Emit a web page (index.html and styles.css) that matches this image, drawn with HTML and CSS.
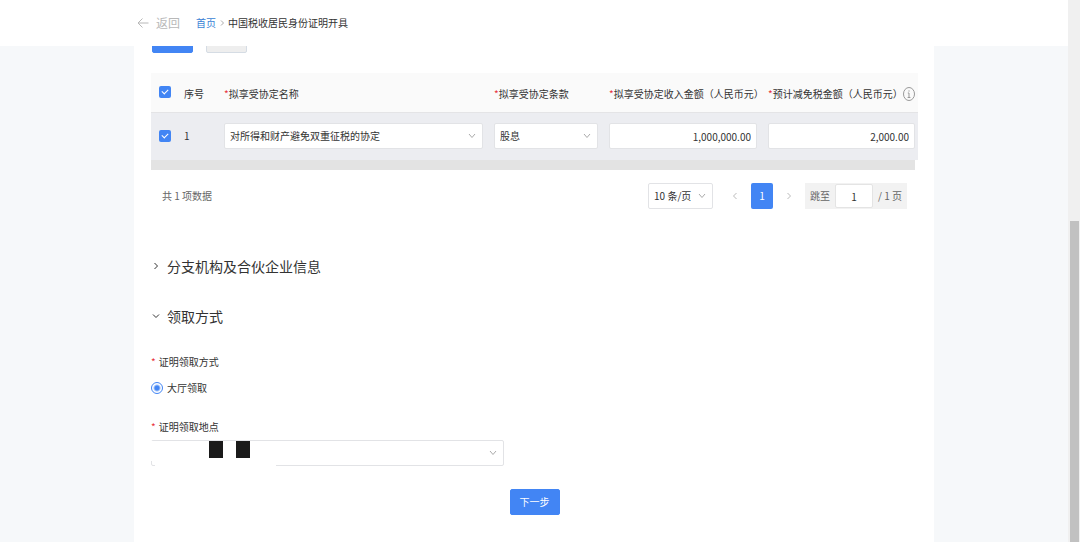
FILE: index.html
```html
<!DOCTYPE html>
<html lang="zh-CN">
<head>
<meta charset="UTF-8" />
<meta name="viewport" content="width=device-width, initial-scale=1.0" />
<title>中国税收居民身份证明开具</title>
<link rel="stylesheet" href="styles.css">
</head>
<body>
  <div class="page">
    <header class="topbar">
      <div class="topbar-inner">
        <a class="back" href="#">
          <svg width="12" height="12" viewBox="0 0 12 12"><path d="M11.500 6H1M5.500 1.500L1 6l4.500 4.500"/></svg>
          返回
        </a>
        <nav class="crumbs">
          <a href="#">首页</a>
          <svg class="crumb-sep" width="4" height="6" viewBox="0 0 4 6"><path d="M1 .5L3.500 3 1 5.500"/></svg>
          <span>中国税收居民身份证明开具</span>
        </nav>
      </div>
    </header>

    <main class="card">
      <div class="toolbar">
        <button class="btn primary" type="button" aria-label="增加"></button>
        <button class="btn plain" type="button" aria-label="删除"></button>
      </div>

      <table class="grid">
        <colgroup>
          <col class="c-check"><col class="c-no"><col><col class="c-term"><col class="c-income"><col class="c-tax">
        </colgroup>
        <thead>
          <tr>
            <th class="check"><input type="checkbox" aria-label="全选" checked></th>
            <th>序号</th>
            <th><i>*</i>拟享受协定名称</th>
            <th><i>*</i>拟享受协定条款</th>
            <th><i>*</i>拟享受协定收入金额（人民币元）</th>
            <th>
              <div class="th-info">
                <span><i>*</i>预计减免税金额（人民币元）</span>
                <svg width="12" height="14" viewBox="0 0 12 14"><ellipse cx="6" cy="7" rx="5.500" ry="6.500"/><path d="M6 6v4.500M4.800 6H6M4.600 10.500h2.800M6 3.400v1.200"/></svg>
              </div>
            </th>
          </tr>
        </thead>
        <tbody>
          <tr>
            <td class="check"><input type="checkbox" aria-label="选择第1行" checked></td>
            <td>1</td>
            <td>
              <div class="select">
                <select aria-label="拟享受协定名称"><option>对所得和财产避免双重征税的协定</option></select>
                <svg class="arrow" width="8" height="6" viewBox="0 0 8 6"><path d="M1 1l3 3.500L7 1"/></svg>
              </div>
            </td>
            <td>
              <div class="select">
                <select aria-label="拟享受协定条款"><option>股息</option></select>
                <svg class="arrow" width="8" height="6" viewBox="0 0 8 6"><path d="M1 1l3 3.500L7 1"/></svg>
              </div>
            </td>
            <td><input class="amount" type="text" aria-label="拟享受协定收入金额" value="1,000,000.00"></td>
            <td><input class="amount" type="text" aria-label="预计减免税金额" value="2,000.00"></td>
          </tr>
        </tbody>
      </table>
      <div class="hscroll"></div>

      <div class="pager">
        <span class="total">共 1 项数据</span>
        <div class="select size">
          <select aria-label="每页条数"><option>10 条/页</option></select>
          <svg class="arrow" width="8" height="6" viewBox="0 0 8 6"><path d="M1 1l3 3.500L7 1"/></svg>
        </div>
        <button class="turn" type="button" aria-label="上一页"><svg width="6" height="8" viewBox="0 0 6 8"><path d="M4.500 1L1.500 4l3 3"/></svg></button>
        <button class="num" type="button">1</button>
        <button class="turn" type="button" aria-label="下一页"><svg width="6" height="8" viewBox="0 0 6 8"><path d="M1.500 1l3 3-3 3"/></svg></button>
        <div class="jump">
          <label for="jump">跳至</label>
          <input id="jump" type="text" value="1">
          <span>/ 1 页</span>
        </div>
      </div>

      <h2 class="section">
        <svg width="8" height="8" viewBox="0 0 8 8"><path d="M2.500 1l3 3-3 3"/></svg>
        分支机构及合伙企业信息
      </h2>
      <h2 class="section">
        <svg width="8" height="8" viewBox="0 0 8 8"><path d="M1 2.500l3 3 3-3"/></svg>
        领取方式
      </h2>

      <form class="form">
        <div class="label"><i>*</i>证明领取方式</div>
        <label class="radio"><input type="radio" name="way" checked>大厅领取</label>
        <label class="label" for="place"><i>*</i>证明领取地点</label>
        <div class="select place">
          <select id="place"><option></option></select>
          <span class="mask-edge"></span>
          <span class="mask"><b></b><b></b></span>
          <svg class="arrow" width="8" height="6" viewBox="0 0 8 6"><path d="M1 1l3 3.500L7 1"/></svg>
        </div>
        <button class="btn primary next" type="button">下一步</button>
      </form>
    </main>
  </div>
  <div class="scrollbar"><div class="thumb"></div></div>
</body>
</html>
```
FILE: styles.css
```css
* {
  box-sizing: border-box;
}
body {
  margin: 0;
  display: flex;
  min-height: 100vh;
  background: #f6f8fa;
  color: #333;
  font-family: "Noto Sans CJK SC", "Noto Sans", sans-serif;
  font-size: 10px;
  line-height: 16px;
}
svg {
  display: block;
  flex: none;
  fill: none;
  stroke: currentColor;
}
i {
  color: #e8323c;
  font-style: normal;
}
a {
  color: inherit;
  text-decoration: none;
}
input, select, button {
  margin: 0;
  color: inherit;
  font: inherit;
}
.page {
  flex: 1;
  min-width: 0;
  display: flex;
  flex-direction: column;
}

/* Top bar */
.topbar {
  height: 46px;
  background: #fff;
}
.topbar-inner {
  display: flex;
  align-items: center;
  gap: 16px;
  height: 100%;
  max-width: 800px;
  margin: 0 auto;
  padding-left: 3px;
}
.back {
  display: flex;
  align-items: center;
  gap: 7px;
  color: #b8b8b8;
  font-size: 12px;
}
.crumbs {
  display: flex;
  align-items: center;
  gap: 4px;
}
.crumbs a {
  color: #3a7fd5;
}
.crumb-sep {
  color: #aaa;
}

/* Content card */
.card {
  flex: 1;
  width: 100%;
  max-width: 800px;
  margin: 0 auto;
  padding: 0 16px 24px 17px;
  background: #fff;
  overflow: hidden;
}
.btn {
  height: 26px;
  padding: 0 9px;
  border: 1px solid #4285f4;
  border-radius: 2px;
}
.primary {
  background: #4285f4;
  color: #fff;
}
.plain {
  border-color: #d5dce4;
  background: #eee;
}
/* scrolled under the top bar */
.toolbar {
  display: flex;
  gap: 13px;
  margin: -19px 0 20px 1px;
}
.toolbar .btn {
  width: 41px;
}

/* Table */
.grid {
  width: 100%;
  table-layout: fixed;
  border-collapse: collapse;
}
.c-check { width: 27px; }
.c-no { width: 40px; }
.c-term { width: 115px; }
.c-income { width: 159px; }
.c-tax { width: 156px; }
.grid th {
  height: 39px;
  padding: 3px 5px 0 6px;
  border-bottom: 1px solid #e4e4e6;
  background: #fafafa;
  font-weight: 400;
  text-align: left;
  white-space: nowrap;
}
.grid td {
  height: 48px;
  padding: 0 5px 0 6px;
  background: #ecedf1;
}
.grid .check {
  padding: 0 0 0 8px;
}
.grid td:last-child {
  padding-right: 3px;
}
.th-info {
  display: flex;
  align-items: center;
}
.th-info svg {
  color: #999;
}
input[type="checkbox"] {
  display: block;
  position: relative;
  width: 12px;
  height: 12px;
  appearance: none;
  border-radius: 2px;
  background: #4285f4;
}
input[type="checkbox"]:checked::after {
  content: "";
  position: absolute;
  left: 4px;
  top: 2px;
  width: 4px;
  height: 6px;
  box-sizing: border-box;
  border: solid #fff;
  border-width: 0 1px 1px 0;
  transform: rotate(45deg);
}
.select {
  position: relative;
}
.select select, .amount {
  display: block;
  width: 100%;
  height: 26px;
  padding: 0 5px;
  appearance: none;
  border: 1px solid #e2e3e6;
  border-radius: 2px;
  background: #fff;
}
.amount {
  text-align: right;
}
.arrow {
  position: absolute;
  right: 7px;
  top: 10px;
  color: #aaa;
  pointer-events: none;
}
.hscroll {
  height: 10px;
  margin-right: 3px;
  background: #e3e3e3;
}

/* Pagination */
.pager {
  display: flex;
  align-items: center;
  margin: 13px 11px 45px;
}
.total {
  flex: 1;
  color: #666;
}
.size {
  width: 65px;
  margin-right: 16px;
}
.turn {
  display: flex;
  justify-content: center;
  width: 12px;
  padding: 0;
  border: 0;
  background: none;
  color: #bbb;
}
.num {
  width: 22px;
  height: 26px;
  margin: 0 10px;
  padding: 0;
  border: 0;
  border-radius: 2px;
  background: #4285f4;
  color: #fff;
}
.jump {
  display: flex;
  align-items: center;
  gap: 5px;
  height: 26px;
  margin-left: 10px;
  padding: 0 5px;
  background: #f2f2f2;
  color: #666;
}
.jump input {
  width: 38px;
  height: 24px;
  padding: 0;
  border: 1px solid #e4e4e4;
  border-radius: 2px;
  background: #fff;
  color: #333;
  text-align: center;
}

/* Sections */
.section {
  display: flex;
  align-items: center;
  gap: 7px;
  margin: 0 0 26px 1px;
  font-size: 14px;
  font-weight: 400;
  line-height: 24px;
}
.form {
  display: flex;
  flex-direction: column;
  align-items: flex-start;
}
.label i {
  margin-right: 3px;
}
.radio {
  display: flex;
  align-items: center;
  gap: 4px;
  margin: 10px 0 23px;
}
input[type="radio"] {
  width: 12px;
  height: 12px;
  appearance: none;
  border: 1px solid #4285f4;
  border-radius: 50%;
  background: radial-gradient(circle, #4285f4 2px, #fff 4px);
}
.place {
  width: 100%;
  max-width: 353px;
  margin-top: 5px;
}

.mask-edge {
  position: absolute;
  left: 0;
  top: 1px;
  width: 4px;
  height: 20px;
  background: #fff;
}
.mask {
  position: absolute;
  left: 4px;
  top: 1px;
  display: flex;
  gap: 13px;
  width: 121px;
  height: 26px;
  padding-left: 54px;
  background: #fff;
}
.mask b {
  width: 14px;
  height: 17px;
  background: #1a1a1a;
}
.next {
  align-self: center;
  margin-top: 23px;
}

/* Window scrollbar */
.scrollbar {
  display: flex;
  width: 12px;
  padding: 221px 1px 0 2px;
  background: #f0f0f0;
}
.thumb {
  flex: 1;
  background: #c1c1c1;
}
```
